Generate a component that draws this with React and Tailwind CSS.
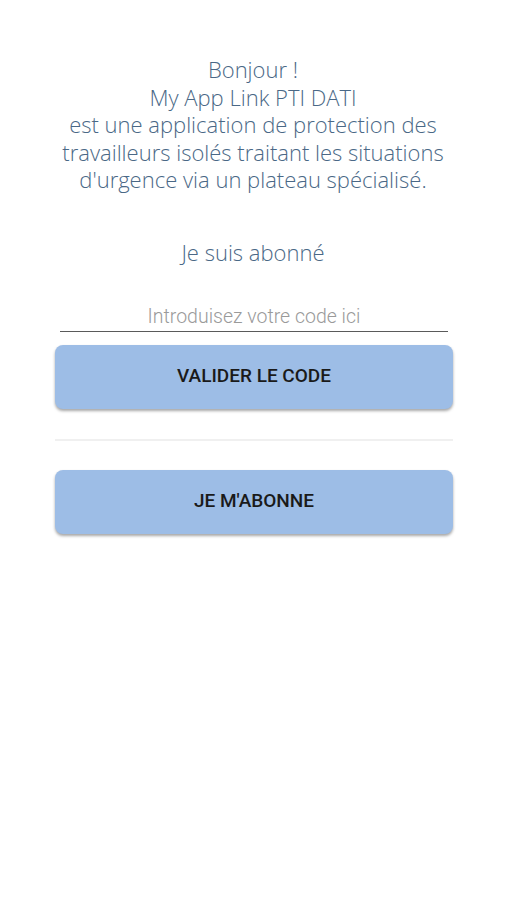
export default function App() {
  return (
    <div className="min-h-[900px] w-full bg-white flex flex-col items-center font-['Open_Sans',sans-serif]">
      <div className="mt-[56px] text-center text-[22px] leading-[27.5px] text-[#4a6886] font-light">
        <p>Bonjour !</p>
        <p>My App Link PTI DATI</p>
        <p>est une application de protection des</p>
        <p>travailleurs isolés traitant les situations</p>
        <p>d'urgence via un plateau spécialisé.</p>
      </div>

      <p className="mt-[44px] text-[22px] leading-[28px] text-[#4a6886] font-light">
        Je suis abonné
      </p>

      <div className="mt-[39px] ml-[2px] w-[388px] border-b-[1.5px] border-[#5a5a5a] pb-[2px]">
        <input
          type="text"
          placeholder="Introduisez votre code ici"
          className="w-full text-center text-[19.5px] leading-[24px] outline-none font-['Roboto',sans-serif] font-light placeholder:text-[#9a9a9a]"
        />
      </div>

      <div className="mt-[13px] ml-[2px] w-[398px] flex flex-col font-['Roboto',sans-serif]">
        <button className="h-[64px] rounded-[8px] bg-[#9dbde6] text-[19px] font-medium text-[#1a1a1a] shadow-[0_2px_3px_rgba(0,0,0,0.35)]">
          VALIDER LE CODE
        </button>
        <div className="mt-[30px] h-[2px] bg-[#f0f0f0]" />
        <button className="mt-[29px] h-[64px] rounded-[8px] bg-[#9dbde6] text-[19px] font-medium text-[#1a1a1a] shadow-[0_2px_3px_rgba(0,0,0,0.35)]">
          JE M'ABONNE
        </button>
      </div>
    </div>
  );
}
